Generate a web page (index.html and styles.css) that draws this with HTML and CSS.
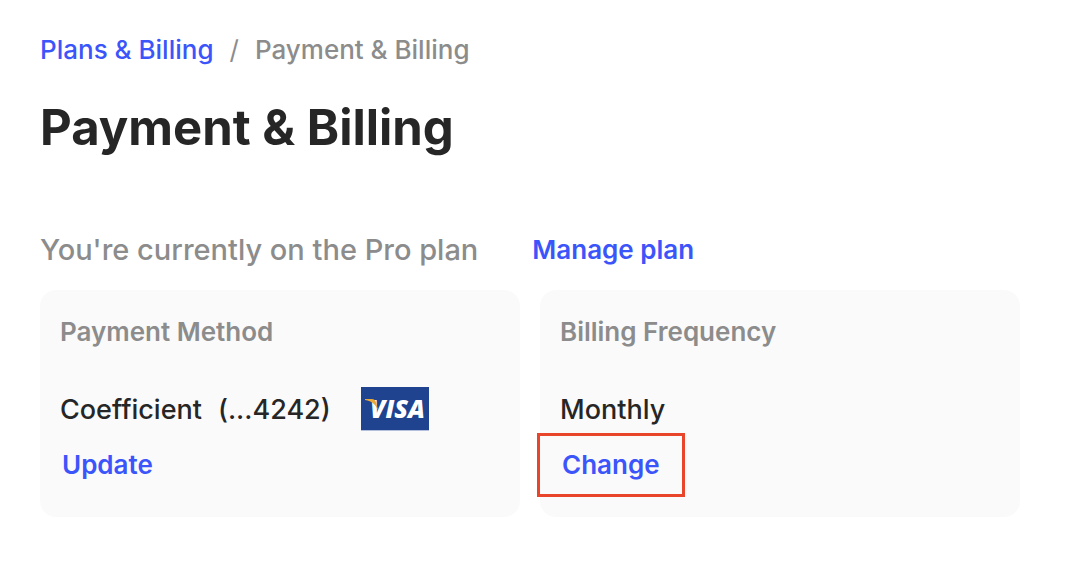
FILE: index.html
```html
<!DOCTYPE html>
<html lang="en">
<head>
    <meta charset="UTF-8">
    <meta name="viewport" content="width=device-width, initial-scale=1.0">
    <title>Payment &amp; Billing</title>
    <link rel="stylesheet" href="styles.css">
</head>
<body>
    <main class="container">
        <nav class="breadcrumb">
            <a href="#">Plans &amp; Billing</a>
            <span class="separator">/</span>
            <span>Payment &amp; Billing</span>
        </nav>
        <h1>Payment &amp; Billing</h1>

        <div class="plan">
            <p>You're currently on the Pro plan</p>
            <a class="action" href="#">Manage plan</a>
        </div>

        <div class="cards">
            <section class="card">
                <h2>Payment Method</h2>
                <div class="value">
                    <span>Coefficient</span>
                    <span class="number">(...4242)</span>
                    <svg class="visa" viewBox="0 0 68 44" role="img" aria-label="Visa">
                        <rect width="68" height="44" fill="#b4c0dc"/>
                        <rect width="68" height="43" fill="#20438f"/>
                        <text x="9" y="31">VISA</text>
                        <path d="M4 12h7c2 0 3 1 4 3l2 8c-3-6-6-9-13-10z" fill="#e9a83a"/>
                    </svg>
                </div>
                <button type="button" class="action">Update</button>
            </section>
            <section class="card">
                <h2>Billing Frequency</h2>
                <div class="value">
                    <span>Monthly</span>
                </div>
                <button type="button" class="action highlight">Change</button>
            </section>
        </div>
    </main>
</body>
</html>
```
FILE: styles.css
```css
* {
    box-sizing: border-box;
}
body {
    font-family: Inter, "Liberation Sans", sans-serif;
    margin: 0;
    background-color: #fff;
    color: #262626;
}
.container {
    max-width: 1060px;
    padding: 32px 40px;
}
a {
    color: #3b55fb;
    text-decoration: none;
}
h1, h2, p {
    margin: 0;
}
.breadcrumb {
    display: flex;
    gap: 16px;
    font-size: 26px;
    font-weight: 500;
    line-height: 36px;
    color: #8c8c8c;
}
.separator {
    font-weight: 400;
}
h1 {
    margin-top: 28px;
    font-size: 49px;
    line-height: 64px;
}
.plan {
    display: flex;
    align-items: center;
    gap: 54px;
    margin-top: 70px;
    font-size: 29px;
    font-weight: 500;
    line-height: 40px;
    color: #8c8c8c;
}
.action {
    padding: 0;
    border: none;
    background: none;
    font-family: inherit;
    font-size: 26px;
    font-weight: 600;
    line-height: 36px;
    color: #3b55fb;
    cursor: pointer;
}
.cards {
    display: grid;
    grid-template-columns: 1fr 1fr;
    gap: 20px;
    margin-top: 20px;
}
.card {
    display: flex;
    flex-direction: column;
    align-items: flex-start;
    padding: 24px 20px 20px;
    border-radius: 16px;
    background: #fafafa;
}
.card h2 {
    font-size: 26px;
    font-weight: 600;
    line-height: 36px;
    color: #8c8c8c;
}
.value {
    display: flex;
    align-items: center;
    height: 44px;
    margin-top: 37px;
    font-size: 27px;
    font-weight: 500;
}
.number {
    margin-left: 16px;
}
.visa {
    width: 68px;
    height: 44px;
    margin-left: 30px;
}
.visa text {
    font-family: "Open Sans", sans-serif;
    font-size: 25px;
    font-style: italic;
    font-weight: 800;
    fill: #fff;
}
.card .action {
    height: 64px;
    margin-top: 2px;
    padding: 0 2px;
}
.card .highlight {
    margin-left: -23px;
    padding: 0 22px;
    border: 3px solid #e9452b;
}
```
